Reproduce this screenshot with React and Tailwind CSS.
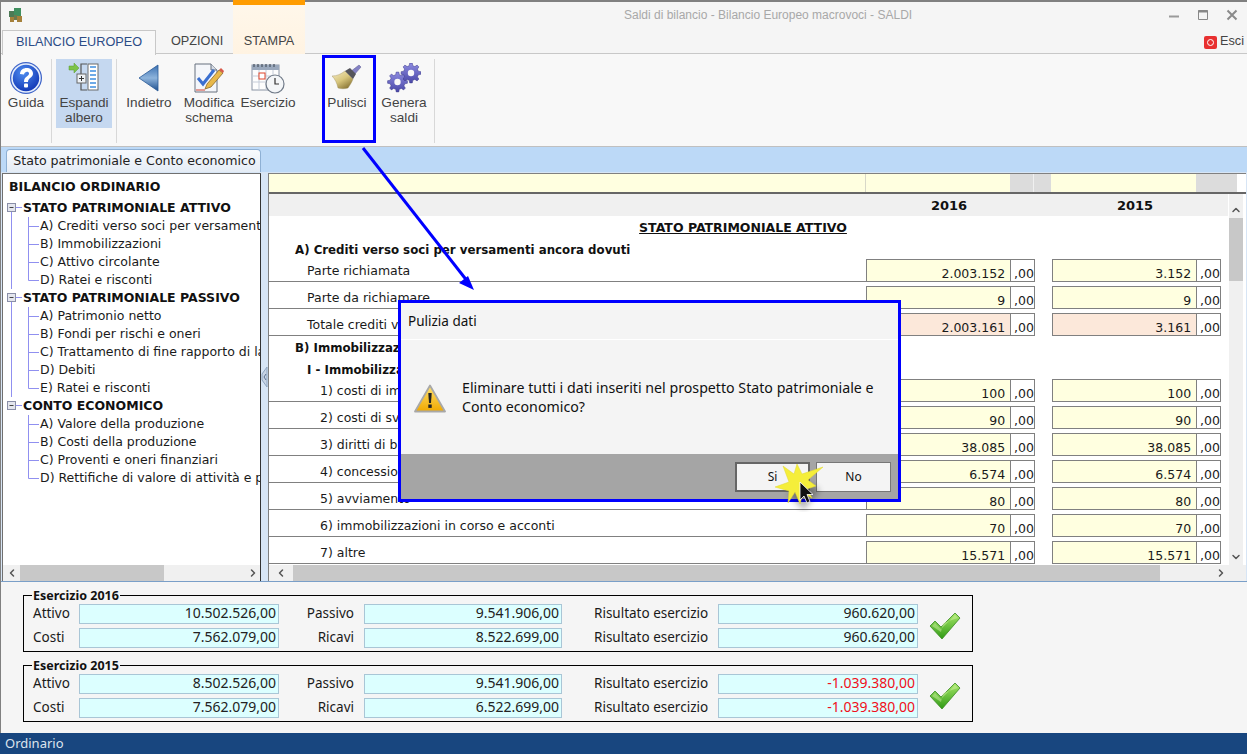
import { ChevronLeft, ChevronRight, ChevronUp, ChevronDown } from "lucide-react";

const tree = [
  {
    title: "STATO PATRIMONIALE ATTIVO",
    items: ["A) Crediti verso soci per versamenti ancora dovuti", "B) Immobilizzazioni", "C) Attivo circolante", "D) Ratei e risconti"],
  },
  {
    title: "STATO PATRIMONIALE PASSIVO",
    items: ["A) Patrimonio netto", "B) Fondi per rischi e oneri", "C) Trattamento di fine rapporto di lavoro", "D) Debiti", "E) Ratei e risconti"],
  },
  {
    title: "CONTO ECONOMICO",
    items: ["A) Valore della produzione", "B) Costi della produzione", "C) Proventi e oneri finanziari", "D) Rettifiche di valore di attività e passività"],
  },
];

const creditRows = [
  { label: "Parte richiamata", a: "2.003.152", b: "3.152" },
  { label: "Parte da richiamare", a: "9", b: "9" },
  { label: "Totale crediti verso soci", a: "2.003.161", b: "3.161", total: true },
];

const fixedRows = [
  { label: "1) costi di impianto e di ampliamento", a: "100", b: "100" },
  { label: "2) costi di sviluppo", a: "90", b: "90" },
  { label: "3) diritti di brevetto industriale", a: "38.085", b: "38.085" },
  { label: "4) concessioni, licenze, marchi", a: "6.574", b: "6.574" },
  { label: "5) avviamento", a: "80", b: "80" },
  { label: "6) immobilizzazioni in corso e acconti", a: "70", b: "70" },
  { label: "7) altre", a: "15.571", b: "15.571" },
];

const esercizi = [
  {
    title: "Esercizio 2016",
    attivo: "10.502.526,00",
    costi: "7.562.079,00",
    passivo: "9.541.906,00",
    ricavi: "8.522.699,00",
    risultato: "960.620,00",
  },
  {
    title: "Esercizio 2015",
    attivo: "8.502.526,00",
    costi: "7.562.079,00",
    passivo: "9.541.906,00",
    ricavi: "6.522.699,00",
    risultato: "-1.039.380,00",
    negative: true,
  },
];

const gearPath = (cx, cy, outer, inner, teeth) => {
  const pts = [];
  const step = (Math.PI * 2) / teeth;
  for (let i = 0; i < teeth; i++) {
    const a = i * step;
    [[-0.3, inner], [-0.16, outer], [0.16, outer], [0.3, inner]].forEach(([k, r]) => {
      pts.push(`${(cx + Math.cos(a + k * step) * r).toFixed(1)},${(cy + Math.sin(a + k * step) * r).toFixed(1)}`);
    });
  }
  return `M${pts.join("L")}Z`;
};

const AppIcon = () => (
  <svg width="16" height="16" viewBox="0 0 16 16">
    <rect x="1" y="4" width="5" height="6" fill="#4d7a55" />
    <rect x="6" y="1" width="7" height="9" fill="#3f8f5f" />
    <rect x="2" y="10" width="4" height="5" fill="#a5803a" />
    <rect x="9" y="9" width="5" height="6" fill="#a5803a" />
    <rect x="6" y="8" width="3" height="5" fill="#6b7a50" />
  </svg>
);

const HelpIcon = () => (
  <svg width="34" height="34" viewBox="0 0 34 34">
    <defs>
      <radialGradient id="helpFill" cx="0.4" cy="0.3" r="0.8">
        <stop offset="0" stopColor="#4f8df0" />
        <stop offset="1" stopColor="#0b2fb0" />
      </radialGradient>
    </defs>
    <circle cx="17" cy="17" r="16" fill="#3e64c8" />
    <circle cx="17" cy="17" r="14.8" fill="#e6eefc" />
    <circle cx="17" cy="17" r="13.2" fill="url(#helpFill)" />
    <path d="M11 13c0-8 13-8 13-.5 0 4.500-5 4-5 8.500h-4c0-6 5-5.500 5-8.500 0-2.500-4.500-2.500-5 1z" fill="#fff" />
    <rect x="15" y="22.500" width="4" height="4" rx="1" fill="#fff" />
  </svg>
);

const ExpandIcon = () => (
  <svg width="32" height="30" viewBox="0 0 32 30">
    <path d="M1 3h5V0l5 5-5 5V7H1z" fill="#7cc34a" stroke="#5b9a32" strokeWidth="0.5" />
    <path d="M19 1h-6v26h6" fill="none" stroke="#555" strokeWidth="1.2" />
    <rect x="9" y="11" width="9" height="9" fill="#eef2f6" stroke="#666" />
    <path d="M11 15.500h5M13.500 13v5" stroke="#333" />
    <rect x="20" y="1" width="10" height="26" fill="#fff" stroke="#6a6a6a" />
    <path d="M22 4h6M22 8h6M22 12h6M22 16h6M22 20h6M22 24h6" stroke="#3f8fe0" strokeWidth="1.6" />
  </svg>
);

const BackIcon = () => (
  <svg width="22" height="28" viewBox="0 0 22 28">
    <defs>
      <linearGradient id="backFill" x1="0" y1="0" x2="0" y2="1">
        <stop offset="0" stopColor="#3a6fb0" />
        <stop offset="0.5" stopColor="#8eb4dc" />
        <stop offset="1" stopColor="#1e4f8e" />
      </linearGradient>
    </defs>
    <path d="M20 1v26L1 14z" fill="url(#backFill)" stroke="#2a5a98" strokeWidth="0.8" />
  </svg>
);

const EditIcon = () => (
  <svg width="32" height="30" viewBox="0 0 32 30">
    <path d="M2 1h16l6 6v22H2z" fill="#f4f6fa" stroke="#66707e" />
    <path d="M18 1v6h6" fill="#d5dbe4" stroke="#66707e" />
    <path d="M5 15l5 6L21 7" fill="none" stroke="#3a6fd0" strokeWidth="3" />
    <path d="M12 26l2-5L26 7l4 3-12 14z" fill="#e8b84a" stroke="#7a5a20" strokeWidth="0.7" />
    <path d="M26 7l2-2 3 3-1 2z" fill="#d85a4a" />
    <path d="M3 27h9" stroke="#d04030" />
  </svg>
);

const CalendarIcon = () => (
  <svg width="34" height="31" viewBox="0 0 34 31">
    <rect x="1" y="2" width="27" height="25" fill="#fdfdfd" stroke="#8a94a4" />
    <rect x="1" y="2" width="27" height="5" fill="#9aa8bc" />
    <path d="M3 1v3M7 1v3M11 1v3M15 1v3M19 1v3M23 1v3" stroke="#55606e" strokeWidth="1.4" />
    <path d="M1 13h27M1 19h27M8 7v20M15 7v20M22 7v20" stroke="#c5ccd8" />
    <rect x="8" y="10" width="6" height="6" fill="#fff" stroke="#e0452a" />
    <circle cx="24" cy="21" r="9" fill="#f4f6f8" stroke="#707a88" strokeWidth="1.2" />
    <path d="M24 15v6h4" fill="none" stroke="#333" strokeWidth="1.2" />
  </svg>
);

const BroomIcon = () => (
  <svg width="30" height="28" viewBox="0 0 30 28">
    <defs>
      <linearGradient id="broomFill" x1="0" y1="0" x2="0.7" y2="1">
        <stop offset="0" stopColor="#f5ecc8" />
        <stop offset="0.55" stopColor="#d8c67c" />
        <stop offset="1" stopColor="#8a7636" />
      </linearGradient>
    </defs>
    <path d="M27 1l2 2-7 8-4-3z" fill="#8482c4" stroke="#5a588e" strokeWidth="0.5" />
    <path d="M0 12C5 12 9 10 13 7l8 8c-1 3-3 6-5 9-3 1-7 1-10 0C5 19 3 15 0 12z" fill="url(#broomFill)" stroke="#9a8c58" strokeWidth="0.4" />
    <path d="M13 7l5-3 6 6-3 5z" fill="#55555c" />
  </svg>
);

const GearsIcon = () => (
  <svg width="34" height="30" viewBox="0 0 34 30">
    <defs>
      <linearGradient id="gearFill" x1="0" y1="0" x2="0" y2="1">
        <stop offset="0" stopColor="#8d8be0" />
        <stop offset="1" stopColor="#4a48a8" />
      </linearGradient>
    </defs>
    <path d={gearPath(10.500, 19, 10, 7.500, 8)} fill="url(#gearFill)" stroke="#3a3888" strokeWidth="0.5" />
    <circle cx="10.500" cy="19" r="3.200" fill="#f8f8f8" />
    <path d={gearPath(24, 10, 10, 7.500, 8)} fill="url(#gearFill)" stroke="#3a3888" strokeWidth="0.5" />
    <circle cx="24" cy="10" r="3.200" fill="#f8f8f8" />
  </svg>
);

const WarningIcon = () => (
  <svg width="32" height="29" viewBox="0 0 32 29">
    <defs>
      <linearGradient id="warnFill" x1="0" y1="0" x2="0" y2="1">
        <stop offset="0" stopColor="#ffe270" />
        <stop offset="1" stopColor="#f0a800" />
      </linearGradient>
    </defs>
    <path d="M16 1.500L31 27.500H1z" fill="url(#warnFill)" stroke="#a8a8a8" strokeWidth="1.800" strokeLinejoin="round" />
    <path d="M14.300 9h3.400l-.7 10h-2z" fill="#222" />
    <rect x="14.300" y="20.500" width="3.400" height="3.400" fill="#222" />
  </svg>
);

const CheckIcon = () => (
  <svg width="32" height="28" viewBox="0 0 32 28">
    <defs>
      <linearGradient id="checkFill" x1="0" y1="0" x2="0" y2="1">
        <stop offset="0" stopColor="#a8e86a" />
        <stop offset="1" stopColor="#2f9a14" />
      </linearGradient>
    </defs>
    <path d="M1 14l5-5 6 6L26 1l5 5-18 21z" fill="url(#checkFill)" stroke="#3a8a22" strokeWidth="0.8" strokeLinejoin="round" />
    <path d="M3 14l3-3 6 6L26 3l3 3-15 5-2 9z" fill="#d4f5a8" opacity="0.45" />
  </svg>
);

const TreeGlyph = ({ parentLine, last }) => (
  <svg width="37" height="18" viewBox="0 0 37 18" className="shrink-0">
    {parentLine && <path d="M8.500 0v18" stroke="#9090f0" />}
    <path d={last ? "M25.500 0v9.500H36" : "M25.500 0v18M25.500 9.500H36"} fill="none" stroke="#9090f0" />
  </svg>
);

const TreeToggle = ({ hasNext }) => (
  <svg width="20" height="18" viewBox="0 0 20 18" className="shrink-0">
    {hasNext && <path d="M8.500 13v5" stroke="#9090f0" />}
    <path d="M13 8.500h6" stroke="#9090f0" />
    <rect x="4.500" y="4.500" width="8" height="8" fill="#e4e6ee" stroke="#8a8fa8" />
    <path d="M6.500 8.500h4" stroke="#444" />
  </svg>
);

const HScroll = ({ leftClass, thumbClass, rightClass }) => (
  <div className="flex h-[16px] items-center bg-[#f0f0f0] text-[#555]">
    <div className={`flex items-center justify-center ${leftClass}`}>
      <ChevronLeft size={12} strokeWidth={3} />
    </div>
    <div className={`h-full bg-[#c8c8c8] ${thumbClass}`} />
    <div className={`flex flex-1 items-center justify-end ${rightClass}`}>
      <ChevronRight size={12} strokeWidth={3} />
    </div>
  </div>
);

const RibbonButton = ({ icon, lines, active, narrow }) => (
  <div className={`flex h-[69px] shrink-0 flex-col items-center pt-[3px] text-[13.6px] leading-[15px] text-[#444] ${narrow ? "w-[46px]" : "w-[56px]"} ${active ? "bg-[#c5d8f0]" : ""}`}>
    <div className="flex h-[32px] items-center justify-center">{icon}</div>
    <div className="mt-px text-center">
      {lines.map((l) => (
        <div key={l} className="whitespace-nowrap">{l}</div>
      ))}
    </div>
  </div>
);

const Amount = ({ value, total }) => (
  <div className="flex h-[23px] w-[169px] border border-[#808080] bg-white leading-[15px]">
    <div className={`flex w-[145px] items-end justify-end border-r border-[#808080] pr-[5px] ${total ? "bg-[#fce8da]" : "bg-[#ffffe0]"}`}>{value}</div>
    <div className="flex flex-1 items-end pl-[3px]">,00</div>
  </div>
);

const TableRow = ({ row, indent }) => (
  <div className="flex h-[27px] w-[959px] shrink-0">
    <div className={`flex h-[27px] w-[597px] items-end border-b border-[#808080] pb-px leading-[18px] ${indent}`}>
      <span className="whitespace-nowrap">{row.label}</span>
    </div>
    <div className="flex items-end gap-[17px] pt-[4px]">
      <Amount value={row.a} total={row.total} />
      <Amount value={row.b} total={row.total} />
    </div>
  </div>
);

const Field = ({ value, negative, className }) => (
  <div className={`flex h-[20px] items-center justify-end border border-[#a9c6d6] bg-[#dcffff] pb-[2px] pr-[2px] text-[14px] ${negative ? "text-[#f01020]" : "text-[#222]"} ${className}`}>
    {value}
  </div>
);

const EsercizioGroup = ({ data }) => (
  <fieldset className="w-[950px] border border-black pb-[3px] pl-[9px]">
    <legend className="-ml-px px-px text-[12.5px] font-bold leading-[17px] text-[#111]">{data.title}</legend>
    <div className="flex items-center">
      <div className="flex flex-col gap-[4px]">
        {[
          ["Attivo", data.attivo, "Passivo", data.passivo],
          ["Costi", data.costi, "Ricavi", data.ricavi],
        ].map(([l1, v1, l2, v2]) => (
          <div key={l1} className="flex items-center">
            <div className="w-[46px] pb-[2px]">{l1}</div>
            <Field value={v1} className="w-[200px]" />
            <div className="w-[75px] pb-[2px] text-right">{l2}</div>
            <Field value={v2} className="ml-[10px] w-[198px]" />
            <div className="ml-[32px] w-[124px] whitespace-nowrap pb-[2px]">Risultato esercizio</div>
            <Field value={data.risultato} negative={data.negative} className="w-[200px]" />
          </div>
        ))}
      </div>
      <div className="ml-[11px]">
        <CheckIcon />
      </div>
    </div>
  </fieldset>
);

export default function App() {
  return (
    <div className="relative flex h-[754px] w-[1247px] flex-col overflow-hidden bg-[#f5f5f5] font-['DejaVu_Sans',sans-serif] text-[12.5px] text-[#1a1a1a]">
      <div className="flex flex-1 flex-col border-l border-[#808080]">
        {/* Title bar + tabs */}
        <div className="grid h-[54px] grid-cols-[232px_72px_1fr] grid-rows-[28px_26px] border-b border-[#c8c8c8] font-['Liberation_Sans',sans-serif] text-[12.7px]">
          <div className="border-t-2 border-[#808080] pl-[7px] pt-[5px]">
            <AppIcon />
          </div>
          <div className="row-span-2 flex items-end justify-center border-t-[5px] border-[#ff9c00] bg-gradient-to-b from-[#fff7ea] to-[#fff3e2] pb-[3px] text-[#444]">
            STAMPA
          </div>
          <div className="flex items-center border-t-2 border-[#808080]">
            <div className="ml-[319px] whitespace-nowrap text-[12px] text-[#a8a8a8]">Saldi di bilancio - Bilancio Europeo macrovoci - SALDI</div>
            <div className="ml-auto flex items-center gap-[17px] pr-[9px]">
              <svg width="12" height="12" viewBox="0 0 12 12"><path d="M1 7.500h10" stroke="#9a9a9a" strokeWidth="2" /></svg>
              <svg width="12" height="12" viewBox="0 0 12 12"><path d="M1.500 1.500h9v9h-9z" fill="none" stroke="#888" /><path d="M1 2.500h10" stroke="#888" strokeWidth="2" /></svg>
              <svg width="12" height="12" viewBox="0 0 12 12"><path d="M1.500 1.500l9 9M10.500 1.500l-9 9" stroke="#8a8a8a" strokeWidth="2" /></svg>
            </div>
          </div>
          <div className="flex items-end pl-px">
            <div className="z-10 -mb-px flex h-[25px] w-[154px] items-center justify-center border border-b-0 border-[#c8c8c8] bg-[#f8f8f8] text-[#2c4c86]">BILANCIO EUROPEO</div>
            <div className="ml-[15px] pb-[3px] text-[#444]">OPZIONI</div>
          </div>
          <div className="flex items-end justify-end gap-[3px] pb-[3px] pr-[3px] text-[#444]">
            <div className="mb-[2px] flex h-[13px] w-[13px] items-center justify-center rounded-[2px] bg-[#e83030]">
              <div className="h-[7px] w-[7px] rounded-full border border-white" />
            </div>
            Esci
          </div>
        </div>

        {/* Ribbon */}
        <div className="flex h-[93px] items-start border-b border-[#c0c0c0] bg-[#f8f8f8] pl-[2px] pt-[5px] font-['Liberation_Sans',sans-serif]">
          <RibbonButton icon={<HelpIcon />} lines={["Guida"]} narrow />
          <div className="ml-[2px] mr-[4px] h-[84px] w-px bg-[#d8d8d8]" />
          <RibbonButton icon={<ExpandIcon />} lines={["Espandi", "albero"]} active />
          <div className="mx-[4px] h-[84px] w-px bg-[#d8d8d8]" />
          <RibbonButton icon={<BackIcon />} lines={["Indietro"]} />
          <div className="ml-[4px]"><RibbonButton icon={<EditIcon />} lines={["Modifica", "schema"]} /></div>
          <div className="ml-[3px]"><RibbonButton icon={<CalendarIcon />} lines={["Esercizio"]} /></div>
          <div className="ml-[23px]"><RibbonButton icon={<BroomIcon />} lines={["Pulisci"]} /></div>
          <div className="ml-px"><RibbonButton icon={<GearsIcon />} lines={["Genera", "saldi"]} /></div>
          <div className="ml-[2px] h-[84px] w-px bg-[#d8d8d8]" />
        </div>

        {/* Document tab strip */}
        <div className="flex h-[25px] items-end bg-[#bcd9f7] pl-[5px]">
          <div className="flex h-[23px] w-[255px] items-center justify-center rounded-t-[4px] border border-b-0 border-[#8eb0d4] bg-gradient-to-b from-[#f8fafd] to-[#e4ecf5] pl-[2px] text-[12.6px] text-[#222]">
            Stato patrimoniale e Conto economico
          </div>
        </div>

        {/* Tree + table */}
        <div className="flex h-[410px] border-b border-[#7a9fc8] bg-[#d7e5f5] pl-px pr-px pt-px">
          <div className="flex w-[259px] flex-col border border-b-0 border-[#707070] border-r-[#333] bg-white">
            <div className="flex-1 overflow-hidden">
              <div className="pl-[6px] pt-[4px] font-bold leading-[18px] text-[#111]">BILANCIO ORDINARIO</div>
              <div className="pt-[3px] leading-[18px]">
                {tree.map((group, g) => (
                  <div key={group.title}>
                    <div className="flex h-[18px] items-center">
                      <TreeToggle hasNext={g < tree.length - 1} />
                      <span className="whitespace-nowrap font-bold text-[#111]">{group.title}</span>
                    </div>
                    {group.items.map((item, i) => (
                      <div key={item} className="flex h-[18px] items-center">
                        <TreeGlyph parentLine={g < tree.length - 1} last={i === group.items.length - 1} />
                        <span className="whitespace-nowrap">{item}</span>
                      </div>
                    ))}
                  </div>
                ))}
              </div>
            </div>
            <HScroll leftClass="w-[17px]" thumbClass="w-[144px]" rightClass="pr-px" />
          </div>

          <div className="flex w-[7px] shrink-0 items-center">
            <svg width="7" height="22" viewBox="0 0 7 22">
              <path d="M6 1L1 8v6l5 7z" fill="#c8d4e4" stroke="#8fa5c0" />
              <path d="M5 8l-2 3 2 3" fill="none" stroke="#5a7090" />
            </svg>
          </div>

          <div className="flex flex-1 flex-col border-l border-t border-[#808080] bg-white">
            <div className="flex h-[20px] shrink-0 border-b-2 border-[#666]">
              <div className="w-[597px] border-r border-[#d8d8c8] bg-[#ffffe0]" />
              <div className="w-[144px] bg-[#ffffe0]" />
              <div className="w-[24px] border-r border-[#f0f0f0] bg-[#dcdcdc]" />
              <div className="w-[17px] bg-[#dcdcdc]" />
              <div className="w-[145px] bg-[#ffffe0]" />
              <div className="w-[41px] bg-[#dcdcdc]" />
            </div>
            <div className="flex min-h-0 flex-1">
              <div className="w-[959px] shrink-0 overflow-hidden">
                <div className="flex h-[22px] bg-[#f0f0f0] text-[13px] font-bold leading-[24px] text-[#111]">
                  <div className="w-[597px]" />
                  <div className="w-[169px] pr-[3px] text-center">2016</div>
                  <div className="w-[17px]" />
                  <div className="w-[169px] pr-[3px] text-center">2015</div>
                </div>
                <div className="h-[22px] w-[948px] text-center font-bold leading-[24px] text-[#111] underline">STATO PATRIMONIALE ATTIVO</div>
                <div className="h-[17px] whitespace-nowrap pl-[26px] text-[11.8px] font-bold leading-[24px] text-[#111]">A) Crediti verso soci per versamenti ancora dovuti</div>
                {creditRows.map((row) => (
                  <TableRow key={row.label} row={row} indent="pl-[38px]" />
                ))}
                <div className="h-[23px] pl-[26px] text-[11.8px] font-bold leading-[24px] text-[#111]">B) Immobilizzazioni</div>
                <div className="h-[16px] pl-[38px] text-[11.8px] font-bold leading-[22px] text-[#111]">I - Immobilizzazioni immateriali</div>
                {fixedRows.map((row) => (
                  <TableRow key={row.label} row={row} indent="pl-[51px]" />
                ))}
              </div>
              <div className="flex w-[15px] shrink-0 flex-col items-center border-l border-white bg-[#f0f0f0] text-[#555]">
                <div className="flex h-[24px] items-end pb-[2px]"><ChevronUp size={12} strokeWidth={3} /></div>
                <div className="h-[63px] w-full bg-[#c8c8c8]" />
                <div className="mt-auto pb-[2px]"><ChevronDown size={12} strokeWidth={3} /></div>
              </div>
            </div>
            <HScroll leftClass="w-[24px]" thumbClass="w-[867px]" rightClass="pr-[19px]" />
          </div>
        </div>

        {/* Bottom totals */}
        <div className="flex flex-col gap-[5px] pl-[22px] pt-[5px] font-['Noto_Sans',sans-serif] text-[13.5px] leading-[18px]">
          {esercizi.map((e) => (
            <EsercizioGroup key={e.title} data={e} />
          ))}
        </div>
      </div>

      <div className="flex h-[21px] items-center bg-[#18467f] pl-[5px] font-['Noto_Sans',sans-serif] text-[13px] text-[#dde4ee]">Ordinario</div>

      {/* Annotation overlays */}
      <div className="absolute left-[322px] top-[55px] h-[88px] w-[54px] border-[3px] border-[#0000ff]" />
      <svg className="absolute left-[355px] top-[140px]" width="130" height="160" viewBox="0 0 130 160">
        <path d="M8 8L113 142" stroke="#0000ff" strokeWidth="3" />
        <path d="M119 150l-15-7 9-7z" fill="#0000ff" />
      </svg>

      {/* Dialog */}
      <div className="absolute left-[398px] top-[300px] flex h-[202px] w-[503px] flex-col border-[3px] border-[#0000ff] bg-[#f4f4f4] font-['Noto_Sans',sans-serif] text-[13.5px] text-[#111]">
        <div className="flex h-[37px] items-center border-b border-white pl-[7px]">Pulizia dati</div>
        <div className="flex flex-1 items-start pl-[13px] pt-[38px]">
          <div className="mt-[6px]"><WarningIcon /></div>
          <div className="ml-[16px] w-[440px] text-[14.2px] leading-[19px]">Eliminare tutti i dati inseriti nel prospetto Stato patrimoniale e Conto economico?</div>
        </div>
        <div className="flex h-[45px] items-start justify-end gap-[6px] bg-[#a5a5a5] pr-[7px] pt-[8px] text-[12px]">
          <div className="flex h-[30px] w-[75px] items-center justify-center border-2 border-[#666] bg-[#f4f4f4]">Si</div>
          <div className="flex h-[30px] w-[75px] items-center justify-center border border-[#777] bg-[#f4f4f4]">No</div>
        </div>
      </div>

      {/* Click highlight and cursor */}
      <svg className="absolute left-[770px] top-[460px]" width="60" height="52" viewBox="0 0 60 52">
        <path d="M18 34l18-12 14 8-10 12-6 8z" fill="#000" opacity="0.3" className="blur-[3px]" />
        <path d="M5 27L19 22 13 6 24 14 27 4 32 14 53 7 38 20 46 26 37 29 42 38 33 33 30 44 25 32 18 43 19 31Z" fill="#f5ee3a" stroke="#e0d830" strokeWidth="0.5" />
        <path d="M30 22v18l4-4 3 7 3-1.500-3-7h6z" fill="#111" stroke="#fff" strokeWidth="0.8" />
      </svg>
    </div>
  );
}
